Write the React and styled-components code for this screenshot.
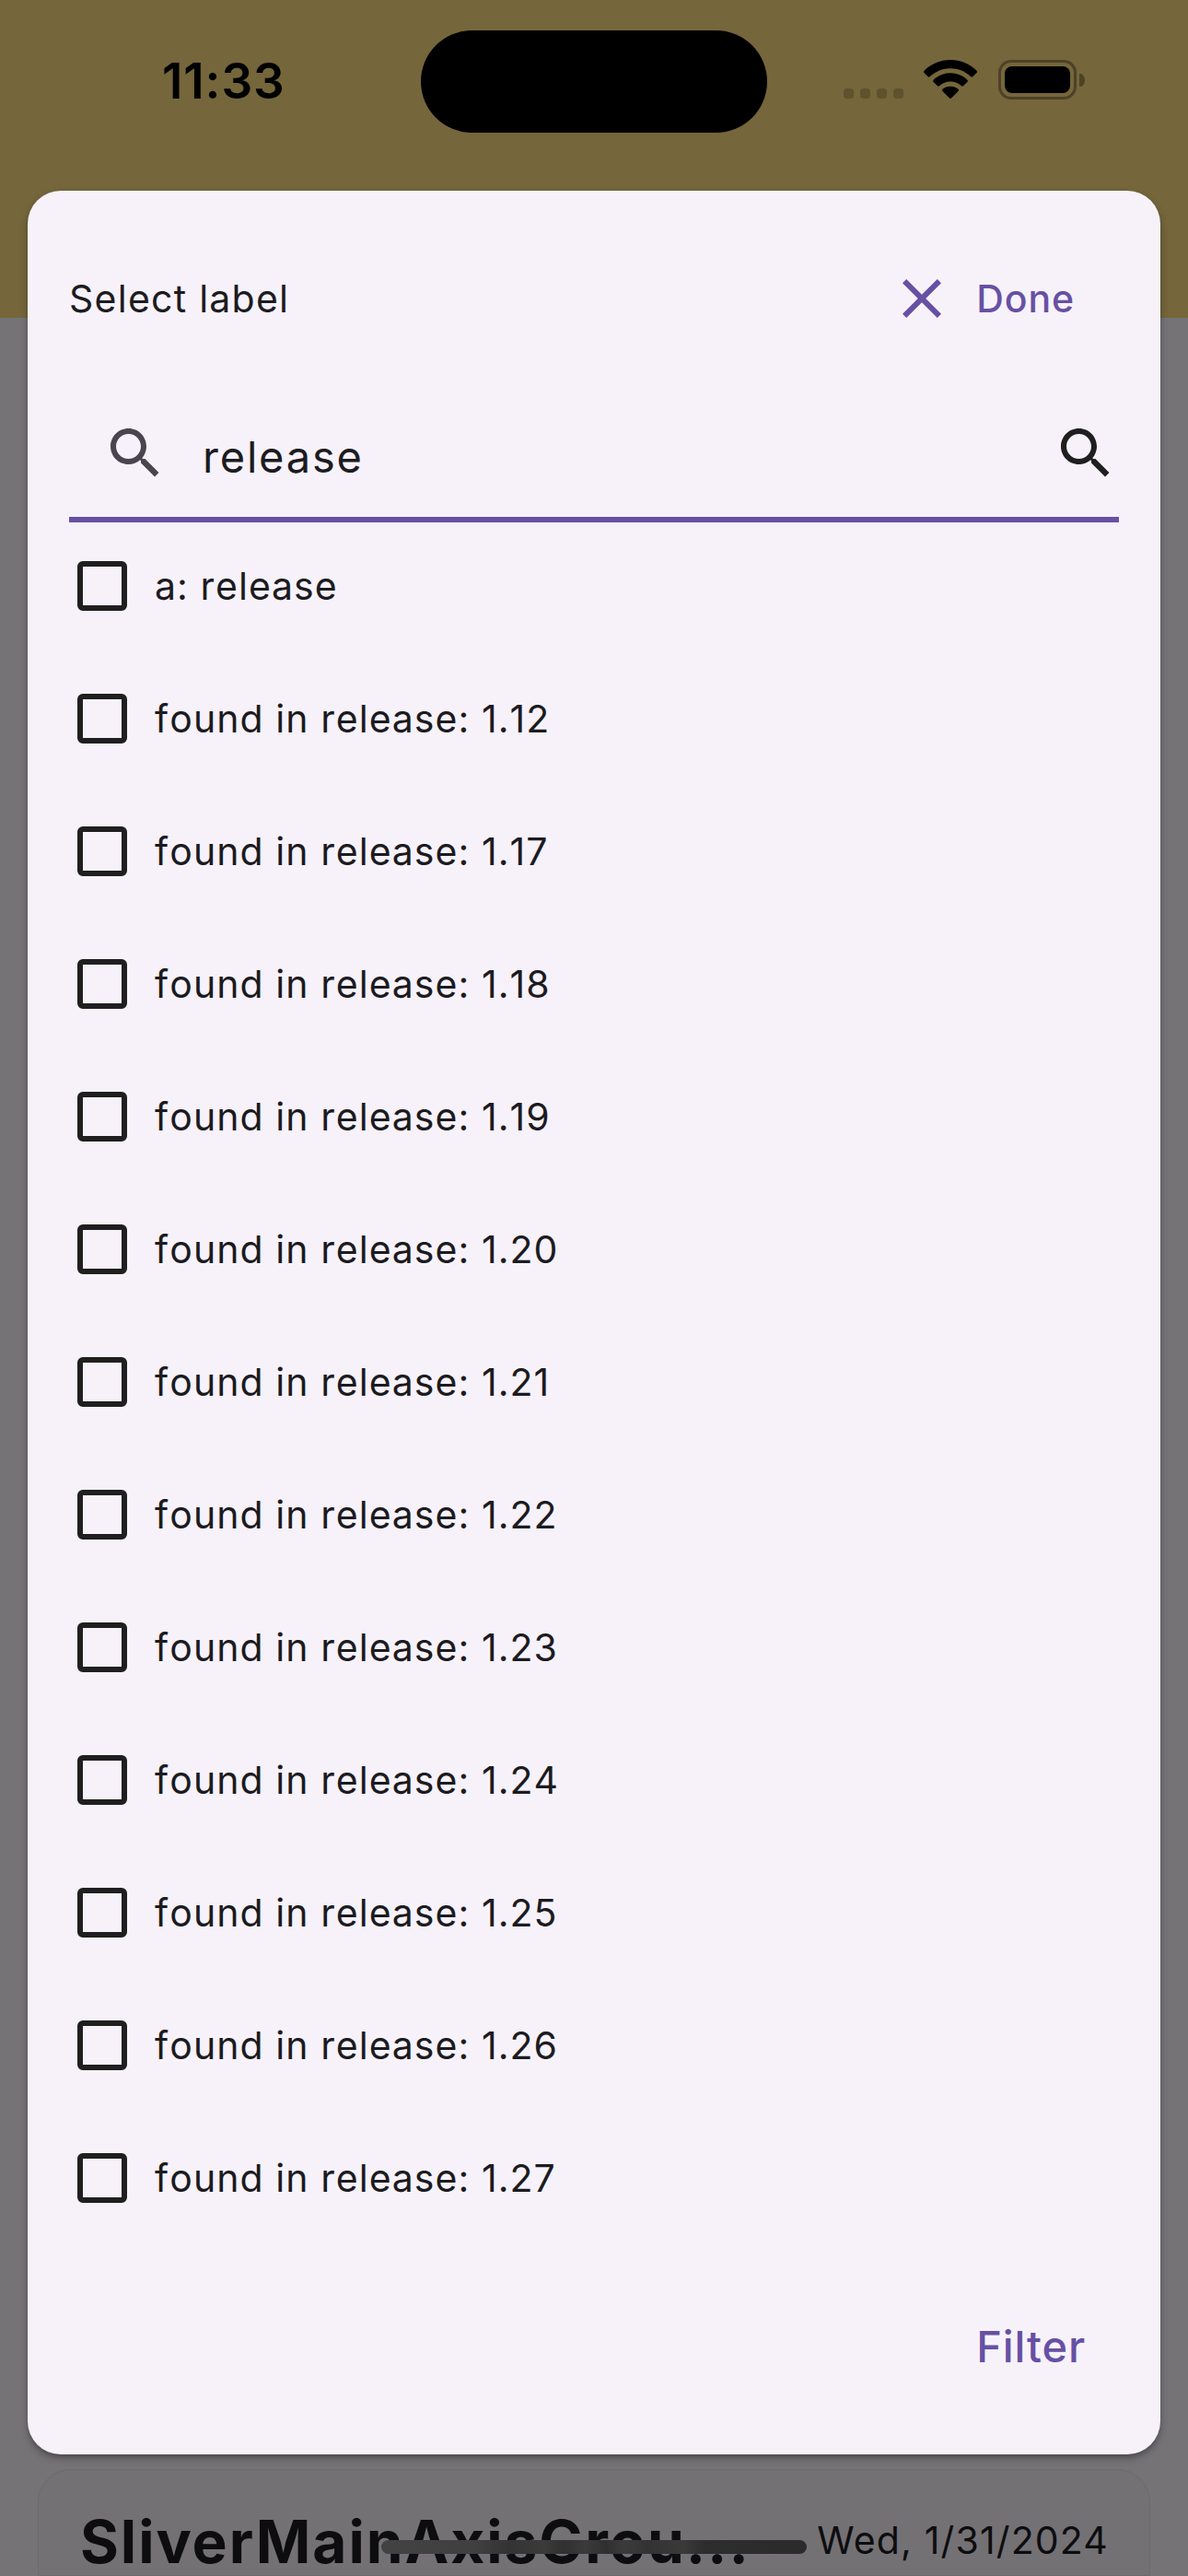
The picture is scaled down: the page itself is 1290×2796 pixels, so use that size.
import React from "react";
import styled, { createGlobalStyle, css } from "styled-components";

const Global = createGlobalStyle`
  * { box-sizing: border-box; }
  html, body { margin: 0; padding: 0; }
  body { font-family: Inter, Roboto, sans-serif; }
  button { border: 0; padding: 0; background: none; font: inherit; }
`;

const Screen = styled.div`
  position: relative;
  width: 1290px;
  height: 2796px;
  overflow: hidden;
  display: flex;
  flex-direction: column;
  background: #757376;
`;

const TopBar = styled.header`
  height: 345px;
  flex: none;
  background: #75663b;
`;

const StatusBar = styled.div`
  height: 177px;
  display: grid;
  grid-template-columns: 457px 376px 457px;
  align-items: start;
`;

const Clock = styled.time`
  padding: 57px 0 0 176px;
  font-size: 53px;
  line-height: 62px;
  font-weight: 600;
  letter-spacing: 0.9px;
  color: #000;
`;

const Island = styled.div`
  height: 111px;
  margin-top: 33px;
  border-radius: 56px;
  background: #000;
`;

const StatusIcons = styled.div`
  display: flex;
  padding: 65px 0 0 83px;
`;

const Signal = styled.div`
  display: flex;
  gap: 7px;
  padding-top: 31px;
`;

const SignalDot = styled.i`
  width: 11px;
  height: 11px;
  border-radius: 4px;
  background: #5e522f;
`;

const Wifi = styled.svg`
  width: 58px;
  height: 43px;
  margin-left: 22px;
`;

const Battery = styled.div`
  display: flex;
  align-items: center;
  height: 43px;
  margin-left: 23px;
`;

const BatteryShell = styled.div`
  width: 85px;
  height: 43px;
  padding: 4px;
  border: 3px solid #4c4226;
  border-radius: 14px;
`;

const BatteryLevel = styled.div`
  height: 100%;
  border-radius: 8px;
  background: #000;
`;

const BatteryNub = styled.div`
  width: 6px;
  height: 14px;
  margin-left: 3px;
  border-radius: 0 5px 5px 0 / 0 7px 7px 0;
  background: #4c4226;
`;

const Backdrop = styled.main`
  flex: 1;
  display: flex;
  flex-direction: column;
  justify-content: flex-end;
  padding: 0 41px;
`;

const IssueCard = styled.article`
  height: 116px;
  display: flex;
  justify-content: space-between;
  align-items: baseline;
  padding: 43px 44px 0 45px;
  border: 1px solid #6d6a68;
  border-radius: 36px 36px 0 0;
  background: #747175;
`;

const IssueTitle = styled.h2`
  margin: 0;
  font-size: 64px;
  line-height: 70px;
  font-weight: 700;
  letter-spacing: 1.95px;
  white-space: nowrap;
  color: #0d0d0f;
`;

const IssueDate = styled.span`
  position: relative;
  top: -10px;
  font-size: 41px;
  letter-spacing: 1.15px;
  line-height: 50px;
  white-space: nowrap;
  color: #0d0d0f;
`;

const Sheet = styled.section`
  position: absolute;
  left: 30px;
  top: 207px;
  width: 1230px;
  height: 2457px;
  display: flex;
  flex-direction: column;
  padding: 45px 45px 0;
  border-radius: 36px;
  background: #f7f2fa;
  box-shadow: 0 4px 8px rgba(0, 0, 0, 0.3), 0 3px 3px rgba(0, 0, 0, 0.08);
`;

const SheetHeader = styled.div`
  display: flex;
  align-items: center;
  height: 144px;
`;

const SheetTitle = styled.h1`
  flex: 1;
  margin: 0;
  font-size: 41px;
  line-height: 60px;
  font-weight: 400;
  letter-spacing: 1.25px;
  color: #1c1b1f;
`;

const actionText = css`
  font-weight: 500;
  color: #6750a4;
`;

const DoneButton = styled.button`
  ${actionText}
  display: flex;
  align-items: center;
  gap: 23px;
  padding-right: 48px;
  font-size: 41px;
  line-height: 60px;
  letter-spacing: 0.9px;
`;

const Icon = styled.svg`
  display: block;
  flex: none;
  width: 72px;
  height: 72px;
  fill: ${(p) => p.$color};
`;

const SearchField = styled.label`
  display: flex;
  align-items: center;
  height: 171px;
  border-bottom: 6px solid #6750a4;
  padding: 27px 0 0 36px;
`;

const SearchValue = styled.span`
  flex: 1;
  padding: 8px 0 0 37px;
  font-size: 47px;
  line-height: 66px;
  letter-spacing: 1.8px;
  color: #1c1b1f;
`;

const LabelList = styled.ul`
  list-style: none;
  margin: -3px 0 0;
  padding: 0;
`;

const LabelRow = styled.li`
  display: flex;
  align-items: center;
  gap: 30px;
  height: 144px;
  padding-left: 9px;
`;

const Checkbox = styled.span`
  width: 54px;
  height: 54px;
  border: 6px solid #1f1f1f;
  border-radius: 6px;
`;

const LabelText = styled.span`
  font-size: 41px;
  line-height: 60px;
  letter-spacing: 1.07px;
  font-kerning: none;
  font-feature-settings: "kern" 0, "calt" 0;
  white-space: pre;
  color: #1c1b1f;
`;

const SheetActions = styled.div`
  display: flex;
  justify-content: flex-end;
  padding: 78px 36px 0 0;
`;

const FilterButton = styled.button`
  ${actionText}
  font-size: 47px;
  line-height: 66px;
  letter-spacing: 0.9px;
`;

const HomeIndicator = styled.div`
  position: absolute;
  left: 414px;
  top: 2757px;
  width: 462px;
  height: 15px;
  border-radius: 8px;
  background: linear-gradient(90deg, #424242 0%, #404040 22%, #333 30%, #3b3b3b 38%, #303030 43%, #3b3b3b 48%, #2f2f2f 53%, #3b3b3b 57%, #333 63%, #3a3a3a 71%, #2d2d2d 76%, #2b2b2b 100%);
`;

const CLOSE =
  "M19 6.41L17.59 5 12 10.59 6.41 5 5 6.41 10.59 12 5 17.59 6.41 19 12 13.41 17.59 19 19 17.59 13.41 12z";
const SEARCH =
  "M15.5 14h-.79l-.28-.27C15.41 12.59 16 11.11 16 9.5 16 5.91 13.09 3 9.5 3S3 5.91 3 9.5 5.91 16 9.5 16c1.61 0 3.09-.59 4.23-1.57l.27.28v.79l5 4.99L20.49 19l-4.99-5zm-6 0C7.01 14 5 11.99 5 9.5S7.01 5 9.5 5 14 7.01 14 9.5 11.99 14 9.5 14z";

const versions = ["1.12", "1.17", "1.18", "1.19", "1.20", "1.21", "1.22", "1.23", "1.24", "1.25", "1.26", "1.27"];
const labels = ["a: release", ...versions.map((v) => `found in release: ${v}`)];

function MaterialIcon({ path, color }) {
  return (
    <Icon viewBox="0 0 24 24" $color={color} aria-hidden="true">
      <path d={path} />
    </Icon>
  );
}

export default function App() {
  return (
    <>
      <Global />
      <Screen>
        <TopBar>
          <StatusBar>
            <Clock>11:33</Clock>
            <Island />
            <StatusIcons>
              <Signal>
                <SignalDot />
                <SignalDot />
                <SignalDot />
                <SignalDot />
              </Signal>
              <Wifi viewBox="0 0 58 43">
                <path d="M29 0C40 0 50 4.400 57.500 11.700Q58.500 12.900 57.500 14L53.300 18.200Q52.300 19 51.300 18.200C45.200 12.400 37.500 9.200 29 9.200S12.800 12.400 6.700 18.200Q5.700 19 4.700 18.200L.5 14Q-.5 12.900 .5 11.700C8 4.400 18 0 29 0Z" />
                <path d="M29 14.300C36.100 14.300 42.600 17.100 47.400 21.700Q48.400 22.800 47.400 23.900L43 28.300Q42 29.100 41 28.300C37.700 25.300 33.600 23.500 29 23.500S20.300 25.300 17 28.300Q16 29.100 15 28.300L10.600 23.900Q9.600 22.800 10.600 21.700C15.400 17.100 21.900 14.300 29 14.300Z" />
                <path d="M29 28.700C32.300 28.700 35.200 29.900 37.500 31.800Q38.600 32.900 37.500 34L30 41.500Q29 42.400 28 41.500L20.500 34Q19.400 32.900 20.500 31.800C22.800 29.900 25.700 28.700 29 28.700Z" />
              </Wifi>
              <Battery>
                <BatteryShell>
                  <BatteryLevel />
                </BatteryShell>
                <BatteryNub />
              </Battery>
            </StatusIcons>
          </StatusBar>
        </TopBar>
        <Backdrop>
          <IssueCard>
            <IssueTitle>SliverMainAxisGrou...</IssueTitle>
            <IssueDate>Wed, 1/31/2024</IssueDate>
          </IssueCard>
        </Backdrop>
        <Sheet>
          <SheetHeader>
            <SheetTitle>Select label</SheetTitle>
            <DoneButton>
              <MaterialIcon path={CLOSE} color="#6750a4" />
              Done
            </DoneButton>
          </SheetHeader>
          <SearchField>
            <MaterialIcon path={SEARCH} color="#49454f" />
            <SearchValue>release</SearchValue>
            <MaterialIcon path={SEARCH} color="#1f1f1f" />
          </SearchField>
          <LabelList>
            {labels.map((text) => (
              <LabelRow key={text}>
                <Checkbox />
                <LabelText>{text}</LabelText>
              </LabelRow>
            ))}
          </LabelList>
          <SheetActions>
            <FilterButton>Filter</FilterButton>
          </SheetActions>
        </Sheet>
        <HomeIndicator />
      </Screen>
    </>
  );
}
